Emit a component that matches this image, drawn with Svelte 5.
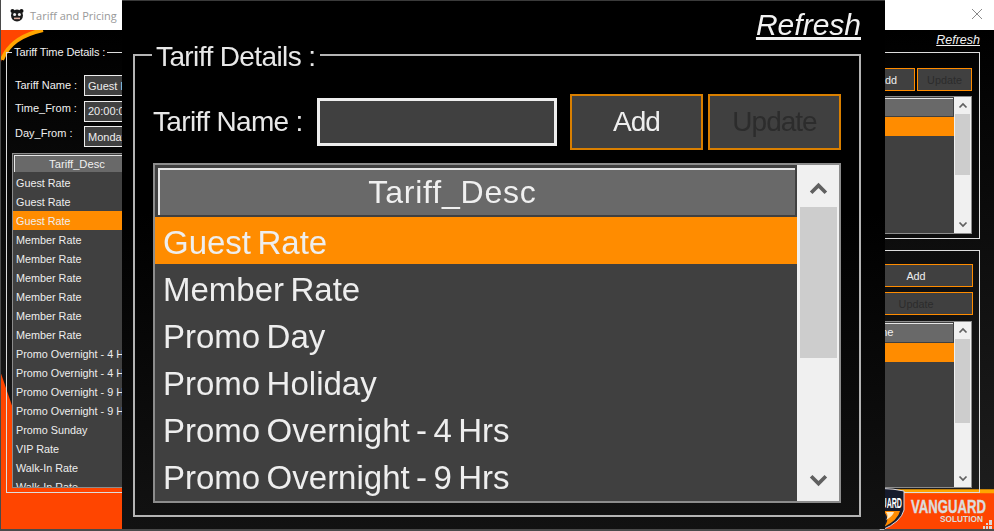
<script>
  const timeRows = [
    "Guest Rate", "Guest Rate", "Guest Rate",
    "Member Rate", "Member Rate", "Member Rate", "Member Rate", "Member Rate", "Member Rate",
    "Promo Overnight - 4 Hrs", "Promo Overnight - 4 Hrs",
    "Promo Overnight - 9 Hrs", "Promo Overnight - 9 Hrs",
    "Promo Sunday", "VIP Rate", "Walk-In Rate", "Walk-In Rate",
  ];
  const tariffRows = [
    "Guest Rate", "Member Rate", "Promo Day", "Promo Holiday",
    "Promo Overnight - 4 Hrs", "Promo Overnight - 9 Hrs",
  ];
  const sideRows = ["", "", "", "", "", "", ""];
</script>

{#snippet chevron(up)}
  <svg class="chev" viewBox="0 0 20 14" aria-hidden="true">
    <polyline points={up ? "3,11 10,4 17,11" : "3,3 10,10 17,3"} />
  </svg>
{/snippet}

{#snippet list(head, rows, selected, thumbTop, thumbHeight)}
  <div class="list">
    <div class="cells">
      <div class="head">{head}</div>
      {#each rows as r, i}
        <div class="row" class:on={i === selected}>{r}</div>
      {/each}
    </div>
    <div class="bar">
      <div class="arrow up">{@render chevron(true)}</div>
      <div class="track">
        <div class="thumb" style="margin-top:{thumbTop}px;height:{thumbHeight}px"></div>
      </div>
      <div class="arrow">{@render chevron(false)}</div>
    </div>
  </div>
{/snippet}

<div class="win">
  <div class="titlebar">
    <svg class="appicon" viewBox="0 0 14 14" aria-hidden="true">
      <circle cx="2.5" cy="3" r="2" fill="#111" />
      <circle cx="11.5" cy="3" r="2" fill="#111" />
      <circle cx="7" cy="7.5" r="6" fill="#1c1c1c" />
      <circle cx="4.6" cy="6.4" r="1.5" fill="#eee" />
      <circle cx="9.4" cy="6.4" r="1.5" fill="#eee" />
      <rect x="4" y="9.6" width="6" height="1.6" fill="#e0b0a0" />
    </svg>
    <span class="title">Tariff and Pricing</span>
    <svg class="close" viewBox="0 0 12 12" aria-hidden="true">
      <path d="M1 1 11 11M11 1 1 11" />
    </svg>
  </div>

  <div class="body">
    <svg class="art" viewBox="0 0 994 501" preserveAspectRatio="none" aria-hidden="true">
      <defs>
        <linearGradient id="panel" x1="0" y1="0" x2="0" y2="1">
          <stop offset="0" stop-color="#000" />
          <stop offset="1" stop-color="#1d1d1d" />
        </linearGradient>
      </defs>
      <path
        fill="url(#panel)"
        d="M0 32 C6 14 20 4 42 0 H994 V463 H200 L122 458 Q40 440 12 380 L0 345 Z"
      />
      <path class="edge" d="M1 30 C7 14 20 5 42 0" />
      <path class="edge" d="M880 463 H994" />
    </svg>

    <div class="cols">
      <fieldset class="time">
        <legend>Tariff Time Details :</legend>
        <div class="form">
          <span class="lbl first">Tariff Name :</span>
          <input readonly value="Guest Rate" />
          <span class="lbl">Time_From :</span>
          <input readonly value="20:00:00" />
          <span class="lbl">Day_From :</span>
          <input readonly value="Monday" />
        </div>
        <div class="timelist">
          {@render list("Tariff_Desc", timeRows, 2, 10, 120)}
        </div>
      </fieldset>

      <div class="side">
        <a class="refresh" href="#top">Refresh</a>
        <div class="box upper">
          <div class="actions">
            <button>Add</button>
            <button class="off">Update</button>
          </div>
          {@render list("Tariff_Desc", sideRows.slice(0, 6), 0, 0, 61)}
        </div>
        <div class="box lower">
          <div class="stack">
            <button>Add</button>
            <button class="off">Update</button>
          </div>
          {@render list("Tariff_Name", sideRows, 0, 0, 84)}
        </div>
        <div class="brand">
          <svg class="shield" viewBox="0 0 46 42" aria-hidden="true">
            <path d="M1 3 Q23 -2 45 3 V22 Q42 34 23 42 Q4 34 1 22 Z" fill="#161b2c" stroke="#d9d9e2" stroke-width="1" />
            <text x="17" y="20" textLength="26" lengthAdjust="spacingAndGlyphs" class="shieldtext">GUARD</text>
            <path d="M24 23 H41 Q39 32 25 39 Q32 30 24 23 Z" fill="#ff8c00" />
            <path d="M27 24 H35 Q34 28 27 32 Q30 28 27 24 Z" fill="#ffe9c0" />
          </svg>
          <svg class="brandname" viewBox="0 0 83 36">
            <text x="1" y="20" textLength="75" lengthAdjust="spacingAndGlyphs" class="vg">VANGUARD</text>
            <text x="30" y="29" textLength="43" lengthAdjust="spacingAndGlyphs" class="sol">SOLUTION</text>
          </svg>
          <svg class="grip" viewBox="0 0 9 9" aria-hidden="true">
            <path d="M6 0h3v3H6zM3 3h2v2H3zM6 3h3v2H6zM0 6h2v3H0zM3 6h2v3H3zM6 6h3v3H6z" />
          </svg>
        </div>
      </div>
    </div>
  </div>

  <div class="dialog">
    <div class="inner">
      <a class="refresh big" href="#top">Refresh</a>
      <fieldset class="details">
        <legend>Tariff Details :</legend>
        <div class="namerow">
          <span class="biglbl">Tariff Name :</span>
          <input readonly value="" />
          <button>Add</button>
          <button class="off">Update</button>
        </div>
        <div class="biglist">
          {@render list("Tariff_Desc", tariffRows, 0, 0, 151)}
        </div>
      </fieldset>
    </div>
  </div>
</div>

<style>
  :global(body) {
    margin: 0;
    background: #3c3c3c;
  }
  .win {
    position: relative;
    width: 994px;
    height: 531px;
    display: flex;
    flex-direction: column;
    overflow: hidden;
    font-family: "Liberation Sans", Arial, sans-serif;
    font-size: 10.8px;
    color: #eee;
    background: #4a4a4a;
  }
  .titlebar {
    height: 30px;
    margin-left: 1px;
    flex: none;
    display: flex;
    align-items: center;
    background: #fff;
  }
  .appicon {
    width: 14px;
    height: 14px;
    margin-left: 9px;
  }
  .title {
    margin-left: 6px;
    font-family: "Open Sans", sans-serif;
    font-size: 11px;
    color: #999;
  }
  .close {
    width: 12px;
    height: 12px;
    margin: 0 11px 2px auto;
    fill: none;
    stroke: #8a8a8a;
    stroke-width: 1;
  }
  .body {
    position: relative;
    height: 499px;
    margin-left: 1px;
    background: #ff4500;
  }
  .art {
    position: absolute;
    inset: 0;
    width: 100%;
    height: 100%;
  }
  .edge {
    fill: none;
    stroke: #ffa500;
    stroke-width: 4;
  }
  .cols {
    position: relative;
    display: flex;
    height: 100%;
  }
  fieldset {
    margin: 0;
    min-width: 0;
    box-sizing: border-box;
  }
  legend {
    padding: 0 2px;
  }
  .time {
    flex: none;
    width: 740px;
    height: 449px;
    margin: 14px 0 0 5px;
    padding: 0 0 0 5px;
    border: 1px solid #ddd;
  }
  .time legend {
    margin-left: 0;
    line-height: 16px;
    font-size: 11px;
    letter-spacing: -0.1px;
    color: #f0f0f0;
  }
  .form {
    display: grid;
    grid-template-columns: 69px 130px;
    grid-auto-rows: 21px;
    row-gap: 4.5px;
    margin-top: 15px;
    margin-left: 3px;
    font-size: 11px;
  }
  .lbl {
    line-height: 14px;
    color: #f0f0f0;
  }
  .lbl.first {
    margin-top: 3px;
  }
  input {
    box-sizing: border-box;
    width: 100%;
    height: 100%;
    border: 1px solid #eee;
    padding: 0 0 0 3px;
    outline: none;
    background: #404040;
    color: #eee;
    font: inherit;
  }
  .timelist {
    width: 146px;
    height: 335px;
    margin-top: 6px;
  }
  .side {
    flex: none;
    width: 220px;
    margin-left: 14px;
    display: flex;
    flex-direction: column;
  }
  .refresh {
    align-self: flex-end;
    margin: 3px 0 5px;
    line-height: 14px;
    font-size: 12.5px;
    font-style: italic;
    color: #f2f2f2;
  }
  .box {
    box-sizing: border-box;
    flex: none;
    padding-right: 7px;
    padding-left: 8px;
    border: 1px solid #ddd;
  }
  .upper {
    height: 187px;
    padding-top: 15px;
  }
  .lower {
    height: 243px;
    margin-top: 11px;
    padding-top: 13px;
  }
  .actions {
    display: flex;
    justify-content: flex-end;
    gap: 2px;
    height: 23px;
    margin-bottom: 5px;
  }
  .actions button {
    width: 55px;
  }
  .stack {
    display: flex;
    flex-direction: column;
    align-items: flex-end;
    gap: 5px;
    margin-bottom: 6px;
  }
  .stack button {
    width: 114px;
    height: 23px;
    margin-right: -1px;
  }
  .upper .list {
    height: 138px;
  }
  .upper .head {
    height: 18px;
    padding-right: 70px;
  }
  .lower .list {
    height: 167px;
  }
  .lower .head {
    height: 19px;
    padding-left: 2px;
  }
  button {
    box-sizing: border-box;
    padding: 0;
    border: 1px solid #ff8c00;
    background: #404040;
    color: #eee;
    font: inherit;
  }
  button.off {
    color: #2c2c2c;
  }
  .list {
    box-sizing: border-box;
    height: 100%;
    display: flex;
    border: 1px solid #8c8c8c;
    background: #404040;
    overflow: hidden;
  }
  .cells {
    flex: 1;
    min-width: 0;
  }
  .head {
    box-sizing: border-box;
    height: 17px;
    margin: 1px;
    border-top: 1px solid #e6e6e6;
    border-left: 1px solid #e6e6e6;
    background: #696969;
    line-height: 16px;
    font-size: 11.2px;
    text-align: center;
    color: #f0f0f0;
  }
  .row {
    height: 19px;
    padding-left: 3px;
    line-height: 21px;
    white-space: nowrap;
    overflow: hidden;
    color: #eee;
  }
  .row.on {
    background: #ff8c00;
  }
  .bar {
    flex: none;
    width: 17px;
    display: flex;
    flex-direction: column;
    background: #f0f0f0;
  }
  .arrow {
    flex: none;
    height: 17px;
    display: flex;
    align-items: center;
    justify-content: center;
  }
  .track {
    flex: 1;
    min-height: 0;
    overflow: hidden;
  }
  .thumb {
    margin-left: 1px;
    margin-right: 1px;
    background: #cdcdcd;
  }
  .chev {
    width: 10px;
    height: 7px;
    fill: none;
    stroke: #606060;
    stroke-width: 3.5;
  }
  .brand {
    flex: 1;
    position: relative;
    display: flex;
    justify-content: flex-end;
    margin-right: -13px;
    min-height: 0;
  }
  .shield {
    position: absolute;
    right: 88px;
    top: -5px;
    width: 46px;
    height: 42px;
  }
  .shieldtext {
    font-family: "Liberation Sans", sans-serif;
    font-size: 14px;
    font-weight: 700;
    fill: #fff;
  }
  .brandname {
    flex: none;
    width: 83px;
    height: 36px;
    font-family: "Liberation Sans", sans-serif;
    font-weight: 700;
  }
  .vg {
    font-size: 18px;
    fill: #dcdcdc;
    stroke: #dcdcdc;
    stroke-width: 0.4;
  }
  .sol {
    font-size: 9.5px;
    fill: #dcdcdc;
  }
  .grip {
    position: absolute;
    right: 1px;
    bottom: 0;
    width: 9px;
    height: 9px;
    fill: #d8d8d8;
  }

  /* magnified dialog on top of the window */
  .dialog {
    position: absolute;
    left: 122px;
    top: 0;
    width: 763px;
    height: 529px;
    box-sizing: border-box;
    border-top: 1px solid #3a3a3a;
    background: linear-gradient(#000 0, #000 40%, #121212 100%);
  }
  .inner {
    display: flex;
    flex-direction: column;
    height: 100%;
    filter: blur(0.45px);
  }
  .refresh.big {
    margin: 8px 24px 0 0;
    line-height: 31px;
    font-size: 30px;
  }
  .details {
    width: 728px;
    height: 477px;
    margin: 0 0 0 11px;
    padding: 0 0 0 18px;
    border: 2px solid #b4b4b4;
  }
  .details legend {
    margin-left: -1px;
    padding: 3px 4px 0;
    line-height: 27px;
    font-size: 28px;
    letter-spacing: -0.6px;
    color: #e8e8e8;
  }
  .namerow {
    display: flex;
    align-items: center;
    height: 56px;
    margin-top: 24px;
  }
  .biglbl {
    width: 164px;
    flex: none;
    font-size: 28px;
    letter-spacing: -0.65px;
    color: #e8e8e8;
  }
  .namerow input {
    width: 240px;
    height: 48px;
    flex: none;
    border: 3px solid #eee;
  }
  .namerow button {
    flex: none;
    width: 133px;
    height: 56px;
    margin-left: 13px;
    border: 2px solid #d97f00;
    font-size: 28px;
    letter-spacing: -1px;
  }
  .namerow button.off {
    margin-left: 5px;
  }
  .biglist {
    width: 688px;
    height: 340px;
    margin-top: 13px;
  }
  .biglist .list {
    border-width: 2px;
  }
  .biglist .head {
    height: 47px;
    margin: 3px 2px 2px 3px;
    padding-right: 50px;
    border-width: 2px;
    line-height: 45px;
    font-size: 32px;
    letter-spacing: 0.8px;
  }
  .biglist .row {
    height: 47px;
    padding-left: 8px;
    line-height: 51px;
    font-size: 33px;
    word-spacing: -2.75px;
  }
  .biglist .bar {
    width: 42px;
  }
  .biglist .arrow {
    height: 42px;
  }
  .biglist .arrow.up {
    padding-top: 4px;
    box-sizing: border-box;
  }
  .biglist .thumb {
    margin-left: 3px;
    margin-right: 2px;
  }
  .biglist .chev {
    width: 21px;
    height: 15px;
  }
</style>
